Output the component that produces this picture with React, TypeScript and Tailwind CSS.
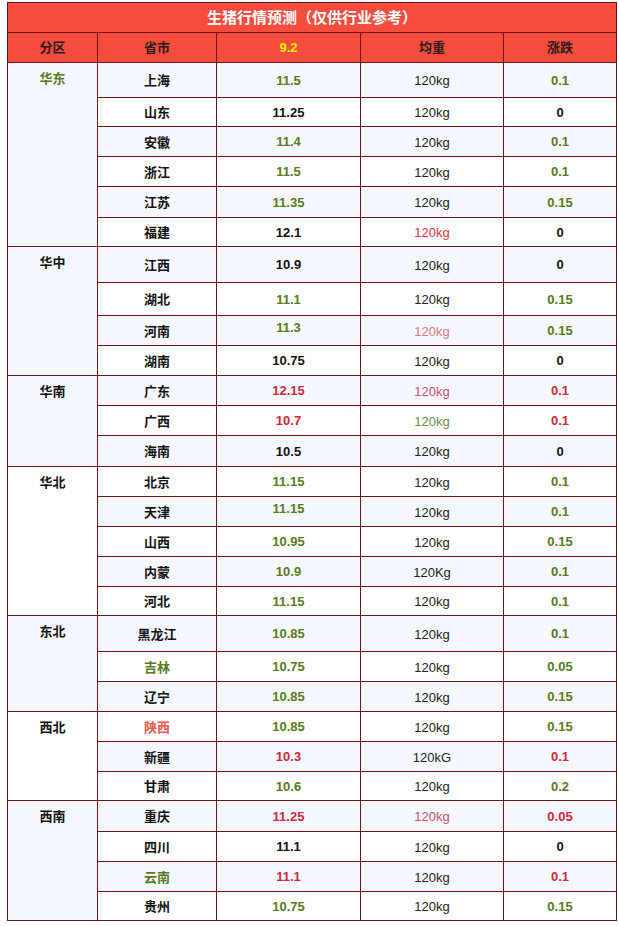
import React from 'react'

// 生猪行情预测 — static price table, grouped by region (rowspan on the first column).

type Tone = 'g' | 'r' | 'k'

type Row = {
  p: string
  pc?: string
  price: string
  c: Tone
  kg?: string
  kc?: string
  d: string
  h: string
  raised?: boolean
}

type Group = { name: string; nc?: string; rows: Row[] }

const TONE: Record<Tone, string> = {
  g: 'text-[#587a1c]',
  r: 'text-[#d1263c]',
  k: 'text-[#111111]',
}

const GROUPS: Group[] = [
  {
    name: '华东',
    nc: 'text-[#587a1c]',
    rows: [
      { p: '上海', price: '11.5', c: 'g', d: '0.1', h: 'h-[35px]' },
      { p: '山东', price: '11.25', c: 'k', d: '0', h: 'h-[29px]' },
      { p: '安徽', price: '11.4', c: 'g', d: '0.1', h: 'h-[30px]' },
      { p: '浙江', price: '11.5', c: 'g', d: '0.1', h: 'h-[30px]' },
      { p: '江苏', price: '11.35', c: 'g', d: '0.15', h: 'h-[31px]' },
      { p: '福建', price: '12.1', c: 'k', kc: 'text-[#d9353f]', d: '0', h: 'h-[29px]' },
    ],
  },
  {
    name: '华中',
    rows: [
      { p: '江西', price: '10.9', c: 'k', d: '0', h: 'h-[36px]' },
      { p: '湖北', price: '11.1', c: 'g', d: '0.15', h: 'h-[33px]' },
      { p: '河南', price: '11.3', c: 'g', kc: 'text-[#e07480]', d: '0.15', h: 'h-[30px]', raised: true },
      { p: '湖南', price: '10.75', c: 'k', d: '0', h: 'h-[30px]' },
    ],
  },
  {
    name: '华南',
    rows: [
      { p: '广东', price: '12.15', c: 'r', kc: 'text-[#cf4c68]', d: '0.1', h: 'h-[30px]' },
      { p: '广西', price: '10.7', c: 'r', kc: 'text-[#6a8c4a]', d: '0.1', h: 'h-[30px]' },
      { p: '海南', price: '10.5', c: 'k', d: '0', h: 'h-[31px]' },
    ],
  },
  {
    name: '华北',
    rows: [
      { p: '北京', price: '11.15', c: 'g', d: '0.1', h: 'h-[30px]' },
      { p: '天津', price: '11.15', c: 'g', d: '0.1', h: 'h-[30px]', raised: true },
      { p: '山西', price: '10.95', c: 'g', d: '0.15', h: 'h-[30px]' },
      { p: '内蒙', price: '10.9', c: 'g', kg: '120Kg', d: '0.1', h: 'h-[30px]' },
      { p: '河北', price: '11.15', c: 'g', d: '0.1', h: 'h-[29px]' },
    ],
  },
  {
    name: '东北',
    rows: [
      { p: '黑龙江', price: '10.85', c: 'g', d: '0.1', h: 'h-[36px]' },
      { p: '吉林', pc: 'text-[#587a1c]', price: '10.75', c: 'g', d: '0.05', h: 'h-[30px]' },
      { p: '辽宁', price: '10.85', c: 'g', d: '0.15', h: 'h-[30px]' },
    ],
  },
  {
    name: '西北',
    rows: [
      { p: '陕西', pc: 'text-[#f0584a]', price: '10.85', c: 'g', d: '0.15', h: 'h-[30px]' },
      { p: '新疆', price: '10.3', c: 'r', kg: '120kG', d: '0.1', h: 'h-[30px]' },
      { p: '甘肃', price: '10.6', c: 'g', d: '0.2', h: 'h-[29px]' },
    ],
  },
  {
    name: '西南',
    rows: [
      { p: '重庆', price: '11.25', c: 'r', kc: 'text-[#c4506e]', d: '0.05', h: 'h-[31px]' },
      { p: '四川', price: '11.1', c: 'k', d: '0', h: 'h-[30px]' },
      { p: '云南', pc: 'text-[#587a1c]', price: '11.1', c: 'r', d: '0.1', h: 'h-[30px]' },
      { p: '贵州', price: '10.75', c: 'g', d: '0.15', h: 'h-[29px]' },
    ],
  },
]

const cell = 'border border-[#6e1616] text-center align-middle p-0'

export default function App() {
  let idx = 0
  return (
    <div className="pt-[2px] pl-[7px] bg-white min-h-[926px] font-['Liberation_Sans','Noto_Sans_CJK_SC',sans-serif] text-[13px] leading-[20px]">
      <table className="border-collapse table-fixed w-[609px]">
        <colgroup>
          <col className="w-[90px]" />
          <col className="w-[119px]" />
          <col className="w-[144px]" />
          <col className="w-[143px]" />
          <col className="w-[113px]" />
        </colgroup>
        <thead>
          <tr className="h-[30px] bg-[#f44d3d]">
            <th colSpan={5} className={cell + ' text-white text-[15px] font-bold'}>
              生猪行情预测（仅供行业参考）
            </th>
          </tr>
          <tr className="h-[30px] bg-[#f44d3d] font-bold text-[#2a1a1a]">
            <th className={cell + ' font-bold'}>分区</th>
            <th className={cell + ' font-bold'}>省市</th>
            <th className={cell + ' font-bold text-[#ffee00]'}>9.2</th>
            <th className={cell + ' font-bold'}>均重</th>
            <th className={cell + ' font-bold'}>涨跌</th>
          </tr>
        </thead>
        <tbody>
          {GROUPS.map((g) =>
            g.rows.map((r, i) => {
              const bg = idx % 2 === 0 ? 'bg-[#f5f9ff]' : 'bg-white'
              idx++
              return (
                <tr key={r.p} className={r.h + ' ' + bg}>
                  {i === 0 && (
                    <td
                      rowSpan={g.rows.length}
                      className={
                        'border border-[#6e1616] text-center align-top p-0 pt-[6px] font-bold ' +
                        (g.nc ?? 'text-[#111111]')
                      }
                    >
                      {g.name}
                    </td>
                  )}
                  <td className={cell + ' pt-[2px] font-bold ' + (r.pc ?? 'text-[#111111]')}>{r.p}</td>
                  <td className={cell + ' font-bold ' + TONE[r.c] + (r.raised ? ' pb-[6px]' : ' pt-[1px]')}>
                    {r.price}
                  </td>
                  <td className={cell + ' pt-[2px] ' + (r.kc ?? 'text-[#222222]')}>{r.kg ?? '120kg'}</td>
                  <td className={cell + ' pt-[1px] font-bold ' + TONE[r.c === 'k' ? 'k' : r.c]}>{r.d}</td>
                </tr>
              )
            }),
          )}
        </tbody>
      </table>
    </div>
  )
}
